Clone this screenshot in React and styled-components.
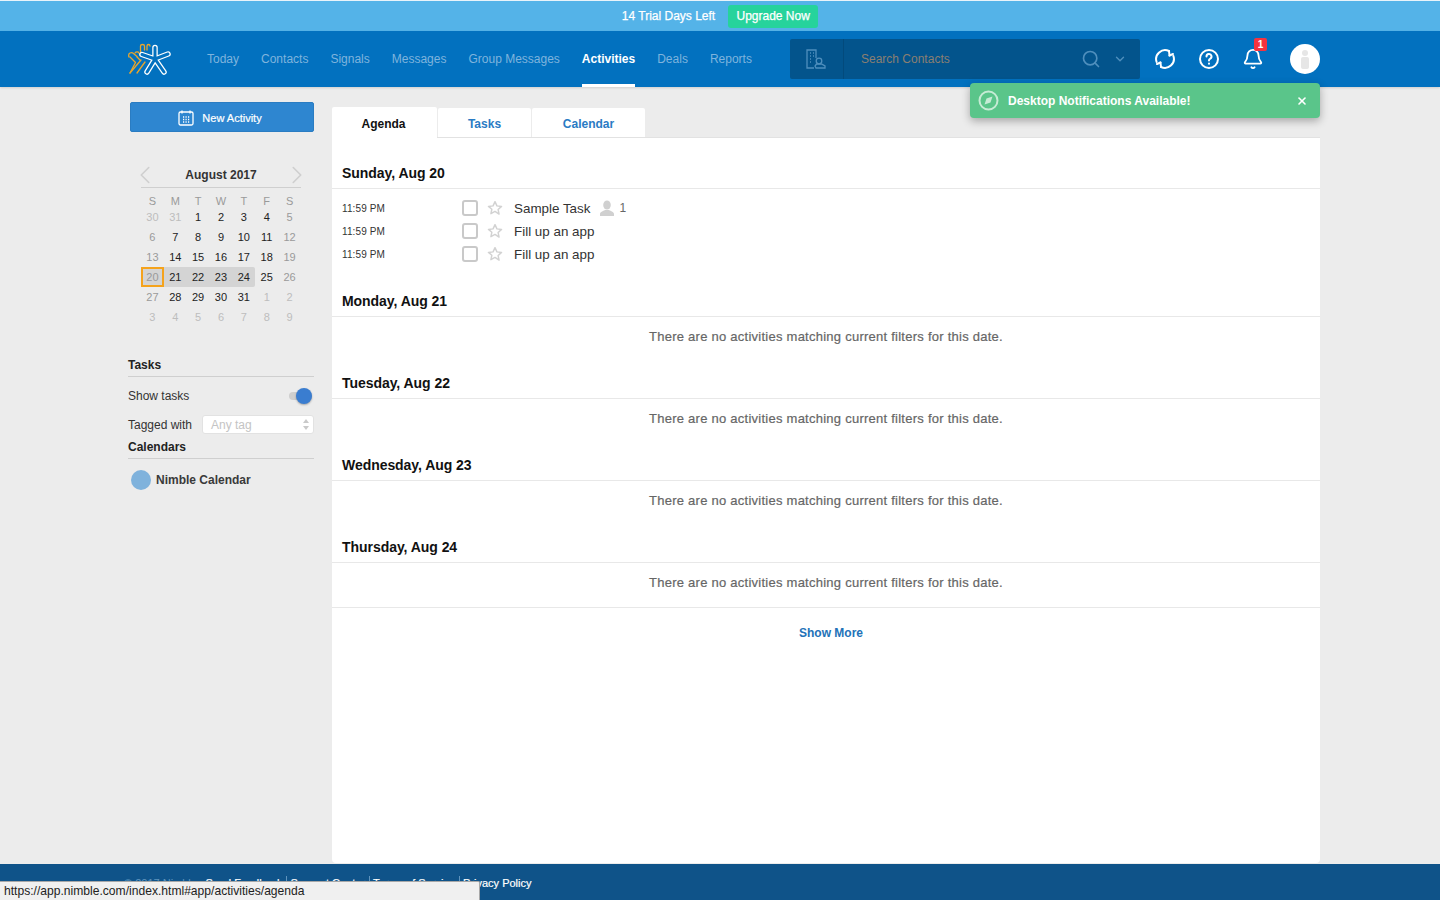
import React from "react";
import styled, { createGlobalStyle } from "styled-components";
import { Search, ChevronDown, ChevronLeft, ChevronRight, Bell, X } from "lucide-react";

const Global = createGlobalStyle`
  html, body { margin: 0; padding: 0; height: 100%; }
  body { font-family: "Liberation Sans", Arial, sans-serif; background: #ececec; color: #222; overflow: hidden; }
  #root { height: 100%; }
  * { box-sizing: border-box; }
`;

const Page = styled.div`
  position: relative;
  height: 900px;
  display: flex;
  flex-direction: column;
  border-top: 1px solid #e8f3fa;
`;
const TrialBar = styled.div`
  height: 30px;
  flex: none;
  background: #54b3e8;
  display: flex;
  align-items: center;
  justify-content: center;
  gap: 13px;
  color: #fff;
  font-size: 12px;
`;
const TrialText = styled.span`
  -webkit-text-stroke: 0.25px #fff;
`;
const Upgrade = styled.span`
  width: 90px;
  height: 23px;
  background: #26d39c;
  border-radius: 3px;
  display: flex;
  align-items: center;
  justify-content: center;
  -webkit-text-stroke: 0.25px #fff;
`;
const Nav = styled.header`
  height: 56px;
  flex: none;
  background: #0271bf;
  display: flex;
  align-items: stretch;
  padding-left: 128px;
  box-shadow: 0 1px 2px rgba(0,0,0,.12);
  position: relative;
`;
const Logo = styled.svg`
  width: 44px;
  height: 56px;
  flex: none;
  margin-right: 35px;
`;
const NavItems = styled.nav`
  display: flex;
  gap: 22px;
  width: 583px;
  flex: none;
`;
const NavItem = styled.a`
  display: flex;
  align-items: center;
  height: 56px;
  font-size: 12px;
  color: ${p => (p.$active ? "#fff" : "#7fb4dd")};
  font-weight: ${p => (p.$active ? 700 : 400)};
  border-bottom: 3px solid ${p => (p.$active ? "#fff" : "transparent")};
  border-top: 3px solid transparent;
  white-space: nowrap;
`;
const SearchBox = styled.div`
  width: 350px;
  height: 40px;
  margin-top: 8px;
  flex: none;
  background: #03548c;
  border-radius: 2px;
  display: flex;
  align-items: center;
`;
const SearchScope = styled.div`
  width: 54px;
  height: 40px;
  padding-right: 3px;
  border-right: 1px solid #024a7c;
  display: flex;
  align-items: center;
  justify-content: center;
  color: #4f8fbd;
`;
const Placeholder = styled.span`
  font-size: 12px;
  color: #8a7f72;
  margin-left: 17px;
  flex: 1;
`;
const SearchIcon = styled(Search)`
  color: #4f8fbd;
  margin-right: 12px;
`;
const Chevron = styled(ChevronDown)`
  color: #4f8fbd;
  margin-right: 13px;
`;
const NavIcons = styled.div`
  display: flex;
  align-items: center;
  margin-left: 3px;
  width: 180px;
  color: #fff;
`;
const IconSlot = styled.div`
  position: relative;
  width: 44px;
  height: 44px;
  display: flex;
  align-items: center;
  justify-content: center;
`;
const Badge = styled.span`
  position: absolute;
  top: 1px;
  right: 8px;
  width: 13px;
  height: 13px;
  background: #f5333f;
  border-radius: 2px;
  color: #fff;
  font-size: 10px;
  font-weight: 700;
  line-height: 13px;
  text-align: center;
`;
const Avatar = styled.div`
  width: 30px;
  height: 30px;
  margin-left: 15px;
  border-radius: 50%;
  background: #fff;
  display: flex;
  align-items: center;
  justify-content: center;
`;
const Toast = styled.div`
  position: absolute;
  left: 970px;
  top: 82px;
  width: 350px;
  height: 35px;
  background: #5ac58a;
  border-radius: 4px;
  box-shadow: 0 3px 8px rgba(0,0,0,.3);
  display: flex;
  align-items: center;
  padding-left: 8px;
  color: #fff;
  font-size: 12px;
  font-weight: 700;
  z-index: 5;
`;
const ToastText = styled.span`
  margin-left: 9px;
  flex: 1;
`;
const ToastClose = styled(X)`
  margin-right: 12px;
`;
const Body = styled.div`
  flex: 1;
  min-height: 0;
  display: flex;
  padding-left: 128px;
  gap: 18px;
`;
const Sidebar = styled.aside`
  width: 186px;
  flex: none;
  padding-top: 15px;
`;
const NewActivity = styled.button`
  width: 184px;
  height: 30px;
  margin-left: 2px;
  background: #2e86d0;
  border: 1px solid #2a7cc2;
  border-radius: 2px;
  color: #fff;
  font: 400 11px "Liberation Sans", sans-serif;
  -webkit-text-stroke: 0.2px #fff;
  display: flex;
  align-items: center;
  justify-content: center;
  gap: 8px;
  padding: 1px 4px 0 0;
`;
const Cal = styled.div`
  width: 160px;
  margin: 29px 0 0 13px;
`;
const CalHead = styled.div`
  height: 27px;
  padding-top: 2px;
  display: flex;
  align-items: center;
  justify-content: space-between;
  border-bottom: 1px solid #cfcfcf;
  color: #cfcfcf;
`;
const CalTitle = styled.div`
  font-size: 12px;
  font-weight: 700;
  color: #333;
`;
const PrevIcon = styled(ChevronLeft)`
  margin-left: -11px;
`;
const NextIcon = styled(ChevronRight)`
  margin-right: -11px;
`;
const CalGrid = styled.div`
  display: grid;
  grid-template-columns: repeat(7, 1fr);
  margin-top: 5px;
`;
const Dow = styled.div`
  height: 14px;
  line-height: 16px;
  font-size: 11px;
  color: #9a9a9a;
  text-align: center;
`;
const DayCell = styled.div`
  height: 20px;
  line-height: 20px;
  font-size: 11px;
  text-align: center;
  color: ${p => (p.$tone === "out" ? "#bdbdbd" : p.$tone === "we" ? "#9a9a9a" : "#222")};
  background: ${p => (p.$range ? "#d4d4d4" : "transparent")};
  border-radius: ${p => (p.$end ? "0 2px 2px 0" : "0")};
  box-shadow: ${p => (p.$today ? "inset 0 0 0 2px #f5a31c" : "none")};
`;
const Section = styled.div`
  font-size: 12px;
  font-weight: 700;
  color: #222;
  height: 21px;
  line-height: 18px;
  border-bottom: 1px solid #cfcfcf;
  margin-top: ${p => p.$mt}px;
`;
const OptionRow = styled.div`
  display: flex;
  align-items: center;
  justify-content: space-between;
  font-size: 12px;
  color: #333;
  height: ${p => p.$h}px;
`;
const Toggle = styled.div`
  position: relative;
  width: 23px;
  height: 8px;
  margin-right: 2px;
  background: #cfcfcf;
  border-radius: 4px;
`;
const Thumb = styled.span`
  position: absolute;
  right: 0;
  top: -4px;
  width: 16px;
  height: 16px;
  border-radius: 50%;
  background: #3a7dd0;
  box-shadow: 0 1px 2px rgba(0,0,0,.3);
`;
const TagSelect = styled.div`
  width: 112px;
  height: 19px;
  background: #fff;
  border: 1px solid #e2e2e2;
  border-radius: 3px;
  display: flex;
  align-items: center;
  justify-content: space-between;
  padding: 0 4px 0 8px;
  color: #c4c4c4;
  font-size: 12px;
`;
const CalendarRow = styled.div`
  display: flex;
  align-items: center;
  gap: 5px;
  margin: 11px 0 0 3px;
  font-size: 12px;
  font-weight: 700;
  color: #3a3a3a;
`;
const Dot = styled.span`
  width: 20px;
  height: 20px;
  border-radius: 50%;
  background: #7fb2dc;
`;
const Main = styled.main`
  width: 988px;
  flex: none;
  padding: 20px 0 1px;
  display: flex;
  flex-direction: column;
`;
const Tabs = styled.div`
  display: flex;
  gap: 1px;
  height: 30px;
  flex: none;
  align-items: flex-end;
`;
const Tab = styled.div`
  width: ${p => p.$w}px;
  height: ${p => (p.$active ? 31 : 29)}px;
  padding: ${p => (p.$active ? "2px 2px 0 0" : "2px 0 0")};
  background: #fff;
  border-radius: 2px 2px 0 0;
  display: flex;
  align-items: center;
  justify-content: center;
  font-size: 12px;
  font-weight: 700;
  color: ${p => (p.$active ? "#111" : "#2a7bc4")};
  margin-bottom: ${p => (p.$active ? -1 : 0)}px;
  position: relative;
  z-index: ${p => (p.$active ? 1 : 0)};
`;
const Panel = styled.div`
  flex: 1;
  background: #fff;
  border-radius: 0 0 4px 4px;
  border-top: 1px solid #e2e2e2;
`;
const DayHead = styled.h3`
  margin: 0;
  padding: ${p => (p.$first ? 26 : 17)}px 10px 6px;
  line-height: 18px;
  font-size: 14px;
  letter-spacing: -0.05px;
  font-weight: 700;
  color: #111;
  border-bottom: 1px solid #e8e8e8;
`;
const Rows = styled.div`
  padding: 8px 0 9px;
`;
const Row = styled.div`
  height: 23px;
  display: flex;
  align-items: center;
  padding-left: 10px;
  font-size: 13.4px;
  color: #333;
`;
const Time = styled.span`
  width: 120px;
  font-size: 10px;
  letter-spacing: 0.12px;
  color: #333;
  flex: none;
`;
const Check = styled.span`
  width: 16px;
  height: 16px;
  border: 2px solid #c9c9c9;
  border-radius: 3px;
  flex: none;
  margin: 0 9px 2px 0;
`;
const StarIcon = styled.svg`
  width: 16px;
  height: 16px;
  flex: none;
  margin: 0 11px 2px 0;
`;
const Person = styled.svg`
  width: 16px;
  height: 16px;
  margin: 0 0 2px 9px;
`;
const Count = styled.span`
  font-size: 12px;
  color: #666;
  margin: 0 0 2px 4px;
`;
const Empty = styled.div`
  height: 40px;
  padding-bottom: 2px;
  display: flex;
  align-items: center;
  justify-content: center;
  font-size: 13px;
  letter-spacing: 0.25px;
  color: #666;
  -webkit-text-stroke: 0.2px #666;
`;
const LastPad = styled.div`
  height: 5px;
  border-bottom: 1px solid #e8e8e8;
`;
const ShowMore = styled.div`
  text-align: center;
  padding: 18px 0 0 10px;
  line-height: 15px;
  font-size: 12px;
  font-weight: 700;
  color: #2272b8;
`;
const Footer = styled.footer`
  height: 36px;
  flex: none;
  background: #0f5389;
  padding: 12px 0 0 124px;
  font-size: 11px;
  line-height: 14px;
  color: #fff;
  display: flex;
  -webkit-text-stroke: 0.2px #fff;
`;
const Copyright = styled.span`
  color: #5e93bd;
  margin-right: 5px;
  -webkit-text-stroke: 0;
`;
const FootLink = styled.span`
  padding: 0 3.5px;
  border-left: ${p => (p.$sep ? "1px solid #5e93bd" : "0")};
`;
const StatusBar = styled.div`
  position: absolute;
  left: 0;
  bottom: 0;
  width: 480px;
  height: 19px;
  background: #f0f0f0;
  border: 1px solid #a8a8a8;
  border-left: 0;
  border-bottom: 0;
  border-top-right-radius: 2px;
  padding-left: 4px;
  font-size: 12.1px;
  line-height: 18px;
  color: #222;
  z-index: 6;
`;

const Star5 = ({ c = "#d2d2d2" }) => (
  <StarIcon viewBox="0 0 24 24" fill="none" stroke={c} strokeWidth="2.2" strokeLinejoin="round">
    <path d="M12 2.5l2.9 6.3 6.9.8-5.1 4.7 1.4 6.8L12 17.1 5.900 20.600l1.400-6.800L2.200 9.600l6.900-.8z" />
  </StarIcon>
);

const days = [
  [30,"out"],[31,"out"],[1],[2],[3],[4],[5,"we"],
  [6,"we"],[7],[8],[9],[10],[11],[12,"we"],
  [13,"we"],[14],[15],[16],[17],[18],[19,"we"],
  [20,"we"],[21],[22],[23],[24],[25],[26,"we"],
  [27,"we"],[28],[29],[30],[31],[1,"out"],[2,"out"],
  [3,"out"],[4,"out"],[5,"out"],[6,"out"],[7,"out"],[8,"out"],[9,"out"],
];
const emptyDays = ["Monday, Aug 21", "Tuesday, Aug 22", "Wednesday, Aug 23", "Thursday, Aug 24"];
const navs = ["Today","Contacts","Signals","Messages","Group Messages","Activities","Deals","Reports"];
const MSG = "There are no activities matching current filters for this date.";
const LIMBS = "M155 59V47.500M155 59l-13-4.500M155 59l13-5M155 59l-8 13M155 59l9 13";

export default function App() {
  return (
    <Page>
      <Global />
      <TrialBar>
        <TrialText>14 Trial Days Left</TrialText>
        <Upgrade>Upgrade Now</Upgrade>
      </TrialBar>
      <Nav>
        <Logo viewBox="128 31 44 56" fill="none" strokeLinecap="round" strokeLinejoin="round">
          <g stroke="#e9a62c" strokeWidth="1.3">
            <path d="M140.500 52V46q0-1.500 2-1.500t2 1.500v4" />
            <path d="M147 50v-4q0-1.500 1.500-1.500t1.500 1.500" />
            <path d="M129 57q-1-3 1-4t3.500 .5l3.500 3" />
            <path d="M135 53q1-1.500 3-1l3 3" />
            <path d="M141 60l-11 13" />
            <path d="M145 62l-8 11" />
            <path d="M130 57l5.500 5.500-5.500 10.500" />
            <path d="M137 57l3 3" />
          </g>
          <g strokeWidth="5.500" stroke="#fff"><path d={LIMBS} /></g>
          <g strokeWidth="3" stroke="#0271bf"><path d={LIMBS} /></g>
        </Logo>
        <NavItems>
          {navs.map(n => <NavItem key={n} $active={n === "Activities"}>{n}</NavItem>)}
        </NavItems>
        <SearchBox>
          <SearchScope>
            <svg width="22" height="22" viewBox="0 0 22 22" fill="none" stroke="currentColor" strokeWidth="1.300">
              <path d="M10 20H3V2h9v8" />
              <path d="M6 5h1M9 5h1M6 8h1M9 8h1M6 11h1M6 14h1" />
              <circle cx="15" cy="13" r="2.800" />
              <path d="M12 20h9v-2l-3.500-2h-5L11 18z" />
            </svg>
          </SearchScope>
          <Placeholder>Search Contacts</Placeholder>
          <SearchIcon size={20} strokeWidth={2} />
          <Chevron size={14} strokeWidth={2.4} />
        </SearchBox>
        <NavIcons>
          <IconSlot>
            <svg width="22" height="22" viewBox="0 0 22 22" fill="none" stroke="#fff" strokeWidth="2" strokeLinecap="round" strokeLinejoin="round">
              <path d="M2.600 14A9 9 0 0 1 15 3" />
              <path d="M19.400 8A9 9 0 0 1 7 19" />
              <path d="M15 3l.5 4.500M7 19l-.5-4.500" />
              <path d="M15.500 7.500L19 6M6.500 14.500L3 16" />
            </svg>
          </IconSlot>
          <IconSlot>
            <svg width="22" height="22" viewBox="0 0 22 22" fill="none" stroke="#fff" strokeWidth="2" strokeLinecap="round">
              <circle cx="11" cy="11" r="9" />
              <path d="M8.500 8.500a2.500 2.500 0 1 1 3.500 2.300c-.7.300-1 .7-1 1.700" />
              <path d="M11 15.500v.2" />
            </svg>
          </IconSlot>
          <IconSlot>
            <Bell size={22} strokeWidth={2} />
            <Badge>1</Badge>
          </IconSlot>
          <Avatar>
            <svg width="12" height="20" viewBox="0 0 12 20" fill="#e6e6e6">
              <circle cx="6" cy="4" r="3" />
              <rect x="2" y="8" width="8" height="12" rx="2" />
            </svg>
          </Avatar>
        </NavIcons>
      </Nav>
      <Toast>
        <svg width="21" height="21" viewBox="0 0 21 21" fill="none">
          <circle cx="10.500" cy="10.500" r="9" stroke="#c5ebd5" strokeWidth="2" />
          <path d="M14.500 6.500l-2 6-6 2 2-6z" fill="#c5ebd5" />
        </svg>
        <ToastText>Desktop Notifications Available!</ToastText>
        <ToastClose size={12} strokeWidth={3.2} />
      </Toast>
      <Body>
        <Sidebar>
          <NewActivity>
            <svg width="16" height="16" viewBox="0 0 16 16" fill="none" stroke="#fff" strokeWidth="1.300">
              <rect x="1" y="2" width="14" height="13" rx="1.500" />
              <path d="M4 .500v3M12 .500v3" />
              <path d="M5 7h1.200M7.500 7h1.200M10 7h1.200M5 9.500h1.200M7.500 9.500h1.200M10 9.500h1.200M5 12h1.200M7.500 12h1.200M10 12h1.200" strokeWidth="1.400" />
            </svg>
            New Activity
          </NewActivity>
          <Cal>
            <CalHead>
              <PrevIcon size={30} strokeWidth={1.3} />
              <CalTitle>August 2017</CalTitle>
              <NextIcon size={30} strokeWidth={1.3} />
            </CalHead>
            <CalGrid>
              {["S","M","T","W","T","F","S"].map((d, i) => <Dow key={i}>{d}</Dow>)}
              {days.map(([n, tone], i) => (
                <DayCell key={i} $tone={tone} $range={i >= 21 && i <= 25} $end={i === 25} $today={i === 21}>{n}</DayCell>
              ))}
            </CalGrid>
          </Cal>
          <Section $mt={29}>Tasks</Section>
          <OptionRow $h={38}>
            Show tasks
            <Toggle><Thumb /></Toggle>
          </OptionRow>
          <OptionRow $h={19}>
            Tagged with
            <TagSelect>
              Any tag
              <svg width="6" height="11" viewBox="0 0 6 11" fill="#c9c9c9"><path d="M3 0l3 4H0zM3 11L0 7h6z" /></svg>
            </TagSelect>
          </OptionRow>
          <Section $mt={4}>Calendars</Section>
          <CalendarRow><Dot />Nimble Calendar</CalendarRow>
        </Sidebar>
        <Main>
          <Tabs>
            <Tab $w={105} $active>Agenda</Tab>
            <Tab $w={93}>Tasks</Tab>
            <Tab $w={113}>Calendar</Tab>
          </Tabs>
          <Panel>
            <DayHead $first>Sunday, Aug 20</DayHead>
            <Rows>
              {["Sample Task","Fill up an app","Fill up an app"].map((t, i) => (
                <Row key={i}>
                  <Time>11:59 PM</Time>
                  <Check />
                  <Star5 />
                  {t}
                  {i === 0 && (
                    <>
                      <Person viewBox="0 0 16 16" fill="#d0d0d0">
                        <ellipse cx="8" cy="5" rx="3.800" ry="4.500" />
                        <path d="M1 16v-2c0-2 3-3 5-4h4c2 1 5 2 5 4v2z" />
                      </Person>
                      <Count>1</Count>
                    </>
                  )}
                </Row>
              ))}
            </Rows>
            {emptyDays.map((d, i) => (
              <React.Fragment key={d}>
                <DayHead>{d}</DayHead>
                <Empty>{MSG}</Empty>
                {i === 3 && <LastPad />}
              </React.Fragment>
            ))}
            <ShowMore>Show More</ShowMore>
          </Panel>
        </Main>
      </Body>
      <Footer>
        <Copyright>© 2017 Nimble</Copyright>
        <FootLink>Send Feedback</FootLink>
        <FootLink $sep>Support Center</FootLink>
        <FootLink $sep>Terms of Service</FootLink>
        <FootLink $sep>Privacy Policy</FootLink>
      </Footer>
      <StatusBar>https://app.nimble.com/index.html#app/activities/agenda</StatusBar>
    </Page>
  );
}
